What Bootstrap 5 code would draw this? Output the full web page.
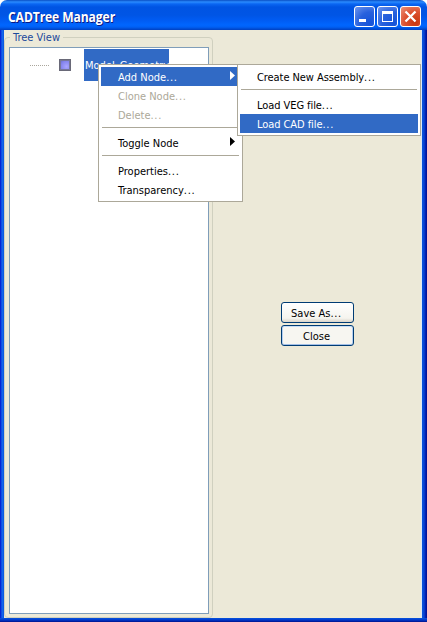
<!DOCTYPE html>
<html lang="en">
<head>
<meta charset="utf-8">
<title>CADTree Manager</title>
<link href="https://cdn.jsdelivr.net/npm/bootstrap@5.3.0/dist/css/bootstrap.min.css" rel="stylesheet">
<style>
body{width:427px;height:622px;overflow:hidden;background:#fff;font:11px/13px "DejaVu Sans Condensed","DejaVu Sans",sans-serif;color:#000}
.window-frame{width:427px;height:622px;border-radius:7px 7px 0 0;overflow:hidden}
.titlebar{height:30px;padding:3px 6px 0 8px;background:linear-gradient(#0a4fc4 0,#2a8bff 2px,#0a66f2 4px,#0054e3 7px,#0055e5 15px,#005bf2 20px,#0066ff 25px,#0060f5 27px,#0040c0 30px)}
.caption-text{font:bold 13.6px/28px "Open Sans","Noto Sans",sans-serif;color:#fff;text-shadow:1px 1px 0 #0a1883;white-space:nowrap;letter-spacing:-.13px;transform:scaleX(.893);transform-origin:0 50%}
.controls{gap:2px;padding-top:3px}
.cap-btn{width:21px;height:21px;border:1px solid #fff;border-radius:3px;background:radial-gradient(circle at 80% 85%,#1553d8,#2861dd 50%,#6e96ee);padding:0}
.cap-close{background:radial-gradient(circle at 75% 80%,#c8370f,#dd5130 50%,#eb9279)}
.cap-btn svg{display:block;width:19px;height:19px}
.frame-body{height:592px;padding:0 5px 4px 4px;background:linear-gradient(90deg,#0019cf 0,#0831d9 1px,#166aee 2px,#0855dd 4px,#0855dd 422px,#0a46d4 424px,#0018a8 426px,#00138c)}
.client{height:588px;background:#ece9d8;border-right:1px solid #dce9f4}
.frame-bottom{margin:0 -5px 0 -4px;height:4px;background:linear-gradient(#0855dd,#0038cc 50%,#00138c)}
.tree-group{width:209px;height:581px;margin-top:7px;border:1px solid #d0d0bf;border-radius:4px;padding:9px 4px 3px}
.tree-legend{top:-7px;left:5px;padding:0 3px;background:#ece9d8;color:#1c4a9c;line-height:14px}
.tree-box{height:567px;width:200px;background:#fff;border:1px solid #7f9db9;padding:1px 0 0 20px}
.tree-line{width:19px;height:1px;margin-top:1px;background:repeating-linear-gradient(90deg,#aaa69c 0 1px,transparent 1px 2px)}
.node-icon{width:12px;height:12px;margin:0 13px 0 10px;border:1px solid #696978;background:radial-gradient(circle at 65% 65%,#aaa6ff,#8484ee 60%,#6262c4);box-shadow:inset 0 0 0 1px #77779b}
.node-name{width:85px;height:32px;background:#316ac5;color:#fff;padding:0 1px;white-space:nowrap;line-height:34px}
.actions{left:281px;top:302px;width:73px;gap:2px}
.xp-btn{height:21px;border:1px solid #003c74;border-radius:3px;background:linear-gradient(#fff,#f5f4ee 80%,#d9d4c9);font:inherit;padding:1px 2px 0 0;color:#000;text-align:center}
.close-btn{background:#f7f6f1;box-shadow:inset 0 1px #c5dcf5,inset 1px 0 #b4cef0,inset -1px 0 #b4cef0,inset 0 -1px #a3bfe6}
.xp-menu{background:#fff;border:1px solid #aca899;padding:2px}
.main-menu{left:98px;top:64px;width:145px;height:138px}
.sub-menu{left:237px;top:64px;width:184px;height:72px}
.sub-menu .xp-item{letter-spacing:-.07px}
.xp-item{height:19px;padding-left:17px;line-height:21px;white-space:nowrap}
.xp-item.hot{background:#316ac5;color:#fff}
.xp-item.off{color:#aca899}
.xp-sep{height:1px;margin:3px 1px 5px;background:#aca899}
.xp-item .dots,.xp-btn .dots{letter-spacing:.7px}
.arrow{width:5px;height:9px;margin:4px 5px 0 0}
</style>
<script src="https://cdn.jsdelivr.net/npm/bootstrap@5.3.0/dist/js/bootstrap.bundle.min.js"></script>
</head>
<body class="m-0">
<div class="window-frame position-relative">
  <header class="titlebar d-flex justify-content-between">
    <div class="caption-text">CADTree Manager</div>
    <div class="d-flex controls">
      <button class="cap-btn" aria-label="Minimize"><svg viewBox="0 0 19 19"><path d="M4 12h7v3H4z" fill="#fff"/></svg></button>
      <button class="cap-btn" aria-label="Maximize"><svg viewBox="0 0 19 19"><path d="M4 4h11v11H4zM5 7v7h9V7z" fill="#fff" fill-rule="evenodd"/></svg></button>
      <button class="cap-btn cap-close" aria-label="Close window"><svg viewBox="0 0 19 19"><path d="M4.5 4.5l10 10m0-10l-10 10" stroke="#fff" stroke-width="2.3"/></svg></button>
    </div>
  </header>
  <main class="frame-body">
    <div class="client d-flex align-items-start">
      <section class="tree-group position-relative">
        <div class="tree-legend position-absolute">Tree View</div>
        <div class="tree-box d-flex align-items-start">
          <div class="d-flex align-items-center">
            <div class="tree-line"></div>
            <div class="node-icon"></div>
            <div class="node-name">Model_Geometry</div>
          </div>
        </div>
      </section>
    </div>
    <div class="frame-bottom"></div>
  </main>
  <div class="actions position-absolute d-flex flex-column">
    <button class="xp-btn">Save As<span class="dots">...</span></button>
    <button class="xp-btn close-btn">Close</button>
  </div>
  <div class="xp-menu main-menu position-absolute">
    <div class="xp-item hot d-flex justify-content-between align-items-start"><span>Add Node<span class="dots">...</span></span><svg class="arrow" viewBox="0 0 5 9"><path d="M0 0l5 4.5-5 4.5z" fill="#fff"/></svg></div>
    <div class="xp-item off">Clone Node<span class="dots">...</span></div>
    <div class="xp-item off">Delete<span class="dots">...</span></div>
    <div class="xp-sep"></div>
    <div class="xp-item d-flex justify-content-between align-items-start"><span>Toggle Node</span><svg class="arrow" viewBox="0 0 5 9"><path d="M0 0l5 4.5-5 4.5z"/></svg></div>
    <div class="xp-sep"></div>
    <div class="xp-item">Properties<span class="dots">...</span></div>
    <div class="xp-item">Transparency<span class="dots">...</span></div>
  </div>
  <div class="xp-menu sub-menu position-absolute">
    <div class="xp-item">Create New Assembly<span class="dots">...</span></div>
    <div class="xp-sep"></div>
    <div class="xp-item">Load VEG file<span class="dots">...</span></div>
    <div class="xp-item hot">Load CAD file<span class="dots">...</span></div>
  </div>
</div>
</body>
</html>
